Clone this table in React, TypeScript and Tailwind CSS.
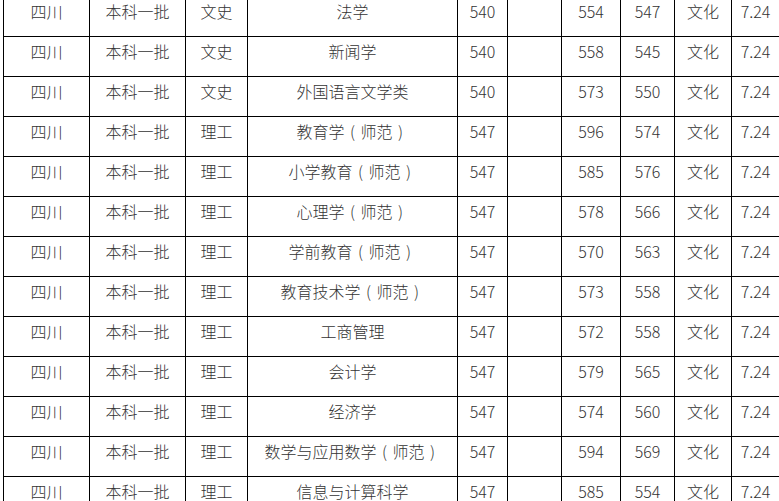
import React from 'react';

type Row = [string, string, string, string, string, string, string, string, string, string];

const rows: Row[] = [
  ['四川', '本科一批', '文史', '法学', '540', '', '554', '547', '文化', '7.24'],
  ['四川', '本科一批', '文史', '新闻学', '540', '', '558', '545', '文化', '7.24'],
  ['四川', '本科一批', '文史', '外国语言文学类', '540', '', '573', '550', '文化', '7.24'],
  ['四川', '本科一批', '理工', '教育学（师范）', '547', '', '596', '574', '文化', '7.24'],
  ['四川', '本科一批', '理工', '小学教育（师范）', '547', '', '585', '576', '文化', '7.24'],
  ['四川', '本科一批', '理工', '心理学（师范）', '547', '', '578', '566', '文化', '7.24'],
  ['四川', '本科一批', '理工', '学前教育（师范）', '547', '', '570', '563', '文化', '7.24'],
  ['四川', '本科一批', '理工', '教育技术学（师范）', '547', '', '573', '558', '文化', '7.24'],
  ['四川', '本科一批', '理工', '工商管理', '547', '', '572', '558', '文化', '7.24'],
  ['四川', '本科一批', '理工', '会计学', '547', '', '579', '565', '文化', '7.24'],
  ['四川', '本科一批', '理工', '经济学', '547', '', '574', '560', '文化', '7.24'],
  ['四川', '本科一批', '理工', '数学与应用数学（师范）', '547', '', '594', '569', '文化', '7.24'],
  ['四川', '本科一批', '理工', '信息与计算科学', '547', '', '585', '554', '文化', '7.24'],
];

const widths = [86, 96, 62, 210, 50, 54, 59, 54, 57, 48];

// full-width parens drawn centred in their em box, as the original font does
function Cell({ text }: { text: string }) {
  const parts = text.split(/([（）])/);
  return (
    <>
      {parts.map((p, i) =>
        p === '（' || p === '）' ? (
          <span key={i} className="inline-block w-[16px] text-center">
            {p === '（' ? '(' : ')'}
          </span>
        ) : (
          <React.Fragment key={i}>{p}</React.Fragment>
        )
      )}
    </>
  );
}

export default function App() {
  return (
    <div
      className="w-[779px] h-[501px] overflow-hidden bg-white pl-[3px]"
      style={{ fontFamily: '"Noto Sans CJK SC", "Noto Sans", sans-serif' }}
    >
      <table className="-mt-[4px] w-[776px] table-fixed border-collapse text-[16px] leading-[24px] font-light text-[#333]">
        <colgroup>
          {widths.map((w, i) => (
            <col key={i} style={{ width: w }} />
          ))}
        </colgroup>
        <tbody>
          {rows.map((r, ri) => (
            <tr key={ri} className="h-[40px]">
              {r.map((c, ci) => (
                <td
                  key={ci}
                  className="border border-black align-top pt-[2px] whitespace-nowrap text-center"
                >
                  <Cell text={c} />
                </td>
              ))}
            </tr>
          ))}
        </tbody>
      </table>
    </div>
  );
}
